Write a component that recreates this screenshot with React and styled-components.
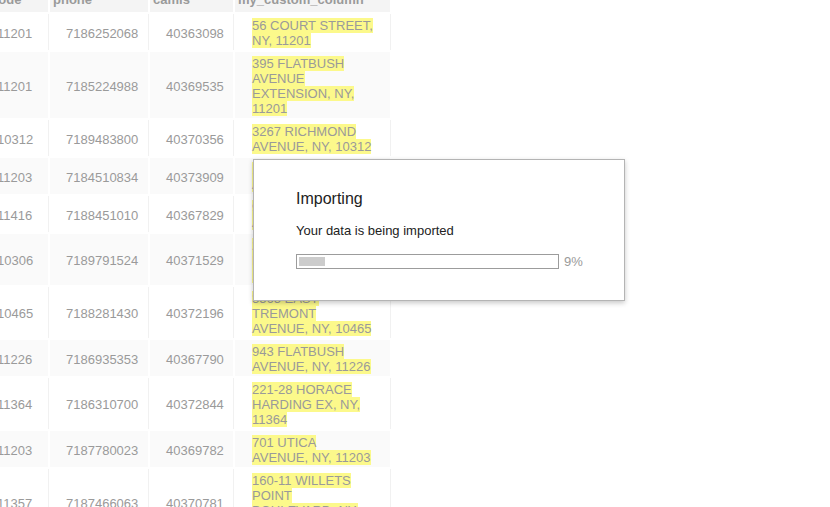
import React from "react";
import styled, { createGlobalStyle } from "styled-components";

const GlobalStyle = createGlobalStyle`
  html, body {
    margin: 0;
    padding: 0;
    background: #ffffff;
    overflow: hidden;
  }
  body {
    font-family: "Liberation Sans", Arial, sans-serif;
  }
`;

const Page = styled.div`
  position: relative;
  width: 830px;
  height: 507px;
  overflow: hidden;
  background: #ffffff;
`;

const Grid = styled.div`
  display: grid;
  grid-template-columns: 78px 98px 83px 155px;
  gap: 2px;
  width: max-content;
  margin: -11px 0 0 -30px;
`;

const HeaderCell = styled.div`
  background: #f4f4f4;
  color: #9a9a9a;
  font-size: 13px;
  font-weight: 700;
  line-height: 15px;
  padding: 3px 8px 5px 3px;
  white-space: nowrap;
`;

const Cell = styled.div`
  display: flex;
  align-items: center;
  background: ${(p) => (p.$alt ? "#fafafa" : "#ffffff")};
  box-shadow: ${(p) => (p.$alt ? "none" : "1px 0 0 #f1f1f1")};
  color: #9a9a9a;
  font-size: 13px;
  line-height: 15px;
  padding: 4px 12px 2px ${(p) => p.$indent || 16}px;
  white-space: nowrap;
`;

const AddressCell = styled.div`
  background: ${(p) => (p.$alt ? "#fafafa" : "#ffffff")};
  box-shadow: ${(p) => (p.$alt ? "none" : "1px 0 0 #f1f1f1")};
  color: #9a9a9a;
  font-size: 13px;
  line-height: 15px;
  padding: 4px 12px 2px 17px;
  white-space: nowrap;
`;

const Mark = styled.span`
  background: #fcf98b;
`;

const Modal = styled.div`
  position: absolute;
  left: 253px;
  top: 159px;
  width: 372px;
  height: 142px;
  box-sizing: border-box;
  padding: 30px 20px 30px 42px;
  background: #ffffff;
  border: 1px solid #b4b4b4;
  box-shadow: 0 2px 5px rgba(0, 0, 0, 0.22);
  color: #222222;
`;

const Title = styled.h2`
  margin: 0;
  font-size: 16px;
  font-weight: 400;
  line-height: 18px;
`;

const Message = styled.p`
  margin: 15px 0 0;
  font-size: 13px;
  line-height: 15px;
`;

const ProgressRow = styled.div`
  display: flex;
  align-items: center;
  gap: 5px;
  margin-top: 16px;
`;

const Track = styled.div`
  flex: 0 0 263px;
  height: 15px;
  box-sizing: border-box;
  border: 1px solid #9c9c9c;
  padding: 2px;
  background: #ffffff;
`;

const Fill = styled.div`
  height: 100%;
  background: #cccccc;
`;

const Percent = styled.span`
  color: #9a9a9a;
  font-size: 13px;
  line-height: 15px;
`;

const rows = [
  ["11201", "7186252068", "40363098", ["56 COURT STREET,", "NY, 11201"]],
  ["11201", "7185224988", "40369535", ["395 FLATBUSH", "AVENUE", "EXTENSION, NY,", "11201"]],
  ["10312", "7189483800", "40370356", ["3267 RICHMOND", "AVENUE, NY, 10312"]],
  ["11203", "7184510834", "40373909", ["1105 UTICA", "AVENUE, NY, 11203"]],
  ["11416", "7188451010", "40367829", ["9402 JAMAICA", "AVENUE, NY, 11416"]],
  ["10306", "7189791524", "40371529", ["2567 HYLAN", "BOULEVARD, NY,", "10306"]],
  ["10465", "7188281430", "40372196", ["3565 EAST", "TREMONT", "AVENUE, NY, 10465"]],
  ["11226", "7186935353", "40367790", ["943 FLATBUSH", "AVENUE, NY, 11226"]],
  ["11364", "7186310700", "40372844", ["221-28 HORACE", "HARDING EX, NY,", "11364"]],
  ["11203", "7187780023", "40369782", ["701 UTICA", "AVENUE, NY, 11203"]],
  ["11357", "7187466063", "40370781", ["160-11 WILLETS", "POINT", "BOULEVARD, NY,", "11357"]],
];

const App = () => {
  const progress = 9;
  return (
    <Page>
      <GlobalStyle />
      <Grid>
        <HeaderCell>zipcode</HeaderCell>
        <HeaderCell>phone</HeaderCell>
        <HeaderCell>camis</HeaderCell>
        <HeaderCell>my_custom_column</HeaderCell>
        {rows.map((r, i) => {
          const alt = i % 2 === 1;
          return (
            <React.Fragment key={i}>
              <Cell $alt={alt} $indent={27}>{r[0]}</Cell>
              <Cell $alt={alt}>{r[1]}</Cell>
              <Cell $alt={alt}>{r[2]}</Cell>
              <AddressCell $alt={alt}>
                {r[3].map((line, j) => (
                  <React.Fragment key={j}>
                    {j > 0 && <br />}
                    <Mark>{line}</Mark>
                  </React.Fragment>
                ))}
              </AddressCell>
            </React.Fragment>
          );
        })}
      </Grid>

      <Modal>
        <Title>Importing</Title>
        <Message>Your data is being imported</Message>
        <ProgressRow>
          <Track>
            <Fill style={{ width: `${progress + 1}%` }} />
          </Track>
          <Percent>{progress}%</Percent>
        </ProgressRow>
      </Modal>
    </Page>
  );
};

export default App;
